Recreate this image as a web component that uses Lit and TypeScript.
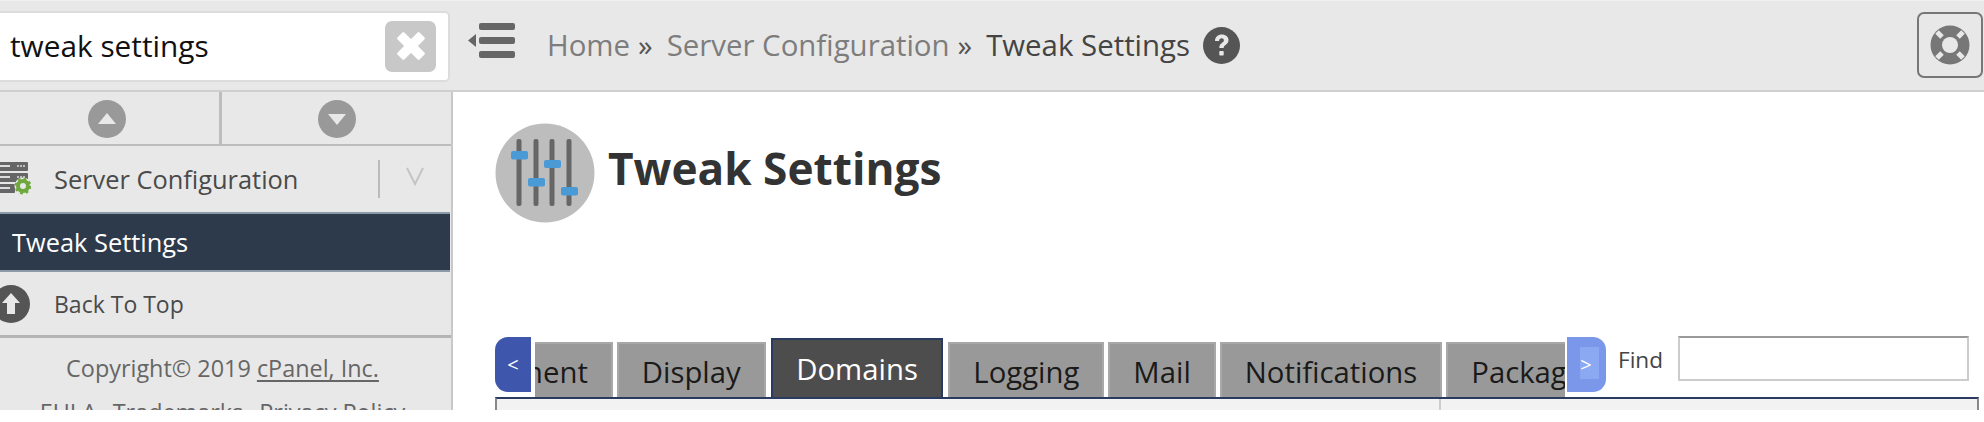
import { LitElement, html, css, svg } from "lit";
import { customElement } from "lit/decorators.js";

const tabs = [
  { label: "Environment", cls: "" },
  { label: "Display", cls: "" },
  { label: "Domains", cls: "active" },
  { label: "Logging", cls: "" },
  { label: "Mail", cls: "" },
  { label: "Notifications", cls: "" },
  { label: "Packages", cls: "" },
  { label: "PHP", cls: "" },
];

@customElement("app-root")
export class AppRoot extends LitElement {
  static styles = css`
    :host { display: block; width: 1984px; height: 422px; background: #fff; overflow: hidden; font-family: "Open Sans", "Liberation Sans", sans-serif; color: #333; }
    * { box-sizing: border-box; }
    .frame { height: 410px; overflow: hidden; display: flex; flex-direction: column; }
    svg { display: block; flex: none; }

    .top { height: 92px; flex: none; background: #e8e8e8; border-top: 1px solid #f0f0f0; border-bottom: 2px solid #cfcfcf; display: flex; align-items: center; }
    .search { width: 454px; height: 71px; margin-top: 1px; margin-left: -4px; background: #fff; border: 2px solid #dcdcdc; border-radius: 5px; display: flex; align-items: center; justify-content: space-between; padding: 0 12px 0 12px; flex: none; }
    .search span { font-size: 29.8px; color: #111; position: relative; top: -1px; }
    .clear { width: 51px; height: 51px; background: #c8c8c8; border-radius: 7px; display: flex; align-items: center; justify-content: center; }
    .burger { margin-left: 17px; margin-top: -11px; }
    .crumbs { margin-left: 32px; display: flex; align-items: center; font-size: 29.4px; color: #7d7d7d; margin-top: -2px; white-space: nowrap; }
    .crumbs .sep { color: #555; margin: 0 14px 0 8px; }
    .crumbs .cur { color: #444; }
    .crumbs svg { margin-left: 13px; margin-top: 2px; }
    .help { margin-left: auto; margin-right: 1px; margin-top: -1px; width: 66px; height: 66px; border: 2px solid #777; border-radius: 7px; display: flex; align-items: center; justify-content: center; }

    .body { flex: 1; display: flex; min-height: 0; }
    .side { width: 453px; flex: none; background: #e8e8e8; border-right: 2px solid #c8c8c8; display: flex; flex-direction: column; }
    .arrows { height: 54px; flex: none; display: flex; border-bottom: 2px solid #bdbdbd; }
    .arrows div { flex: 1; display: flex; align-items: center; justify-content: center; }
    .arrows div:first-child { border-right: 3px solid #bdbdbd; flex: none; width: 222px; padding-right: 5px; }
    .arrows svg { margin-top: 1px; }
    .group { height: 66px; flex: none; display: flex; align-items: center; }
    .group .ico { margin-right: 23px; }
    .group span { font-size: 25.4px; color: #4a4a4a; }
    .group .vline { margin-left: auto; width: 2px; height: 38px; background: #bbb; }
    .group .chev { margin: -6px 27px 0 26px; }
    .current { height: 60px; flex: none; background: #2d3a4b; border-top: 2px solid #8a9aa6; border-bottom: 2px solid #8a9aa6; color: #fff; font-size: 25.4px; padding-left: 12px; display: flex; align-items: center; margin-right: 1px; }
    .back { height: 66px; flex: none; display: flex; align-items: center; border-bottom: 3px solid #b4b4b4; }
    .back span { font-size: 23px; color: #4a4a4a; margin-left: 24px; }
    .foot { text-align: center; font-size: 23.4px; color: #666; padding: 10px 6px 0 0; line-height: 40px; }
    .foot u { text-underline-offset: 3px; }
    .foot .legal { display: flex; justify-content: center; gap: 16px; margin-top: 4px; }

    .main { flex: 1; min-width: 0; padding-left: 42px; padding-top: 31px; display: flex; flex-direction: column; }
    .title { display: flex; align-items: flex-start; height: 214px; flex: none; }
    .title h1 { margin: 0 0 0 13px; font-size: 44.2px; font-weight: 700; color: #333; line-height: 60px; padding-top: 15px; white-space: nowrap; }
    .tabbar { display: flex; height: 60px; flex: none; align-items: flex-start; }
    .nav { width: 36px; height: 55px; flex: none; color: #fff; font-size: 20px; display: flex; align-items: center; justify-content: center; }
    .nav.l { background: #3f56ad; border-radius: 13px 0 0 13px; margin-right: 4px; }
    .nav.r { width: 39px; background: #7b97ea; border-radius: 0 13px 13px 0; margin-left: 2px; position: relative; }
    .nav.r i { position: absolute; left: 13px; top: 10px; width: 19px; height: 32px; background: #8aa9f2; }
    .nav.r b { position: relative; font-weight: 400; margin-left: -1px; }
    .scroll { width: 1030px; height: 60px; overflow: hidden; flex: none; }
    .strip { display: flex; margin-left: -148px; height: 60px; align-items: flex-end; gap: 4px; }
    .tab { height: 55px; background: #999; border: 2px solid #a8a8a8; border-bottom: 0; font-size: 29.3px; color: #1a1a1a; padding: 2px 23px 0; display: flex; align-items: center; white-space: nowrap; flex: none; }
    .tab.active { height: 59px; background: #4d4d4d; color: #fff; border: 2px solid #2a3a60; border-bottom: 0; margin: 0 1px; padding: 0 23.5px; }
    .find { display: flex; align-items: flex-start; margin-left: 12px; margin-top: -1px; }
    .find label { font-size: 22.6px; color: #444; margin-top: 8px; width: 60px; }
    .find .box { width: 291px; height: 45px; background: #fff; border: 2px solid; border-color: #999 #ccc #ccc #ccc; }
    .panel { margin-right: 5px; height: 60px; background: #f2f2f2; border-top: 2px solid #2a3a60; border-left: 2px solid #888; border-right: 2px solid #888; display: flex; }
    .panel div:first-child { width: 944px; border-right: 2px solid #ccc; }
  `;

  render() {
    return html`<div class="frame">
      <div class="top">
        <div class="search">
          <span>tweak settings</span>
          <div class="clear"><svg width="38" height="38" viewBox="0 0 30 30"><path d="M5 9l4-4 6 6 6-6 4 4-6 6 6 6-4 4-6-6-6 6-4-4 6-6z" fill="#fff" stroke="#fff" stroke-width="2" stroke-linejoin="round"/></svg></div>
        </div>
        <svg class="burger" width="48" height="35" viewBox="0 0 48 35" fill="#666">
          <rect x="12" y="0" width="36" height="7" rx="2"/><rect x="12" y="14" width="36" height="7" rx="2"/><rect x="12" y="28" width="36" height="7" rx="2"/>
          <path d="M9 11v13L1 17.500z"/>
        </svg>
        <div class="crumbs">
          <span>Home</span><span class="sep">»</span><span>Server Configuration</span><span class="sep">»</span><span class="cur">Tweak Settings</span>
          <svg width="37" height="37" viewBox="0 0 37 37"><circle cx="18.500" cy="18.500" r="18.500" fill="#555"/><path d="M12 14c0-4 3-6.500 6.800-6.500 4 0 6.700 2.300 6.700 5.600 0 2.500-1.300 3.800-3 5-1.300.9-1.800 1.500-1.800 3h-4.400c0-2.700.8-4 2.600-5.200 1.300-.9 2-1.500 2-2.600 0-1.300-1-2.100-2.300-2.100-1.500 0-2.400 1-2.500 2.800z" fill="#e8e8e8"/><rect x="16.300" y="24" width="4.400" height="4.500" rx=".8" fill="#e8e8e8"/></svg>
        </div>
        <div class="help">
          <svg width="40" height="40" viewBox="0 0 40 40">
            <circle cx="20" cy="20" r="19.500" fill="#777"/>
            <circle cx="20" cy="20" r="8" fill="#e8e8e8"/>
            <g stroke="#e8e8e8" stroke-width="5"><path d="M7 7l5 5M33 7l-5 5M7 33l5-5M33 33l-5-5"/></g>
          </svg>
        </div>
      </div>
      <div class="body">
        <div class="side">
          <div class="arrows">
            <div><svg width="38" height="40" viewBox="0 0 38 40"><circle cx="19" cy="20" r="19" fill="#999"/><path d="M10 25l9-11 9 11z" fill="#e8e8e8"/></svg></div>
            <div><svg width="38" height="40" viewBox="0 0 38 40"><circle cx="19" cy="20" r="19" fill="#999"/><path d="M10 15l9 11 9-11z" fill="#e8e8e8"/></svg></div>
          </div>
          <div class="group">
            <svg class="ico" width="31" height="36" viewBox="0 0 31 36">
              ${[1, 12, 23].map((y) => svg`<rect x="-4" y="${y}" width="${y === 23 ? 19 : 32}" height="9" rx="1" fill="#666"/><rect x="0" y="${y + 3}" width="10" height="2" fill="#ddd"/>${y === 23 ? "" : svg`<circle cx="18" cy="${y + 4}" r="1" fill="#ddd"/><circle cx="21" cy="${y + 4}" r="1" fill="#ddd"/><circle cx="24" cy="${y + 4}" r="1" fill="#ddd"/>`}`)}
              <circle cx="23" cy="25" r="8.500" fill="#e8e8e8"/>
              <circle cx="23" cy="25" r="5" fill="none" stroke="#6fa83c" stroke-width="4"/>
              <circle cx="23" cy="25" r="7.300" fill="none" stroke="#6fa83c" stroke-width="2.200" stroke-dasharray="2.800 3"/>
            </svg>
            <span>Server Configuration</span>
            <div class="vline"></div>
            <svg class="chev" width="18" height="20" viewBox="0 0 18 20"><path d="M1 2l8 16 8-16" fill="none" stroke="#c4c4c4" stroke-width="2"/></svg>
          </div>
          <div class="current">Tweak Settings</div>
          <div class="back">
            <svg width="30" height="38" viewBox="0 0 30 38"><circle cx="11" cy="19" r="19" fill="#555"/><path d="M11 8l9 10h-5v11H7V18H2z" fill="#e8e8e8"/></svg>
            <span>Back To Top</span>
          </div>
          <div class="foot">
            <div>Copyright© 2019 <u>cPanel, Inc.</u></div>
            <div class="legal"><span>EULA</span><span>Trademarks</span><span>Privacy Policy</span></div>
          </div>
        </div>
        <div class="main">
          <div class="title">
            <svg width="100" height="100" viewBox="0 0 100 100">
              <circle cx="50" cy="50" r="49.500" fill="#bdbdbd"/>
              <g fill="#666"><rect x="21.500" y="16" width="5" height="67" rx="2"/><rect x="38.500" y="16" width="5" height="67" rx="2"/><rect x="54.500" y="16" width="5" height="67" rx="2"/><rect x="71.500" y="16" width="5" height="67" rx="2"/></g>
              <g fill="#4a9ad6"><rect x="16" y="28" width="17" height="8.500" rx="2"/><rect x="33" y="55" width="17" height="8.500" rx="2"/><rect x="49" y="37" width="17" height="8" rx="2"/><rect x="66" y="64" width="17" height="8.500" rx="2"/></g>
            </svg>
            <h1>Tweak Settings</h1>
          </div>
          <div class="tabbar">
            <div class="nav l">&lt;</div>
            <div class="scroll"><div class="strip">
              ${tabs.map((t) => html`<div class="tab ${t.cls}">${t.label}</div>`)}
            </div></div>
            <div class="nav r"><i></i><b>&gt;</b></div>
            <div class="find"><label>Find</label><div class="box"></div></div>
          </div>
          <div class="panel"><div></div><div></div></div>
        </div>
      </div>
    </div>`;
  }
}
